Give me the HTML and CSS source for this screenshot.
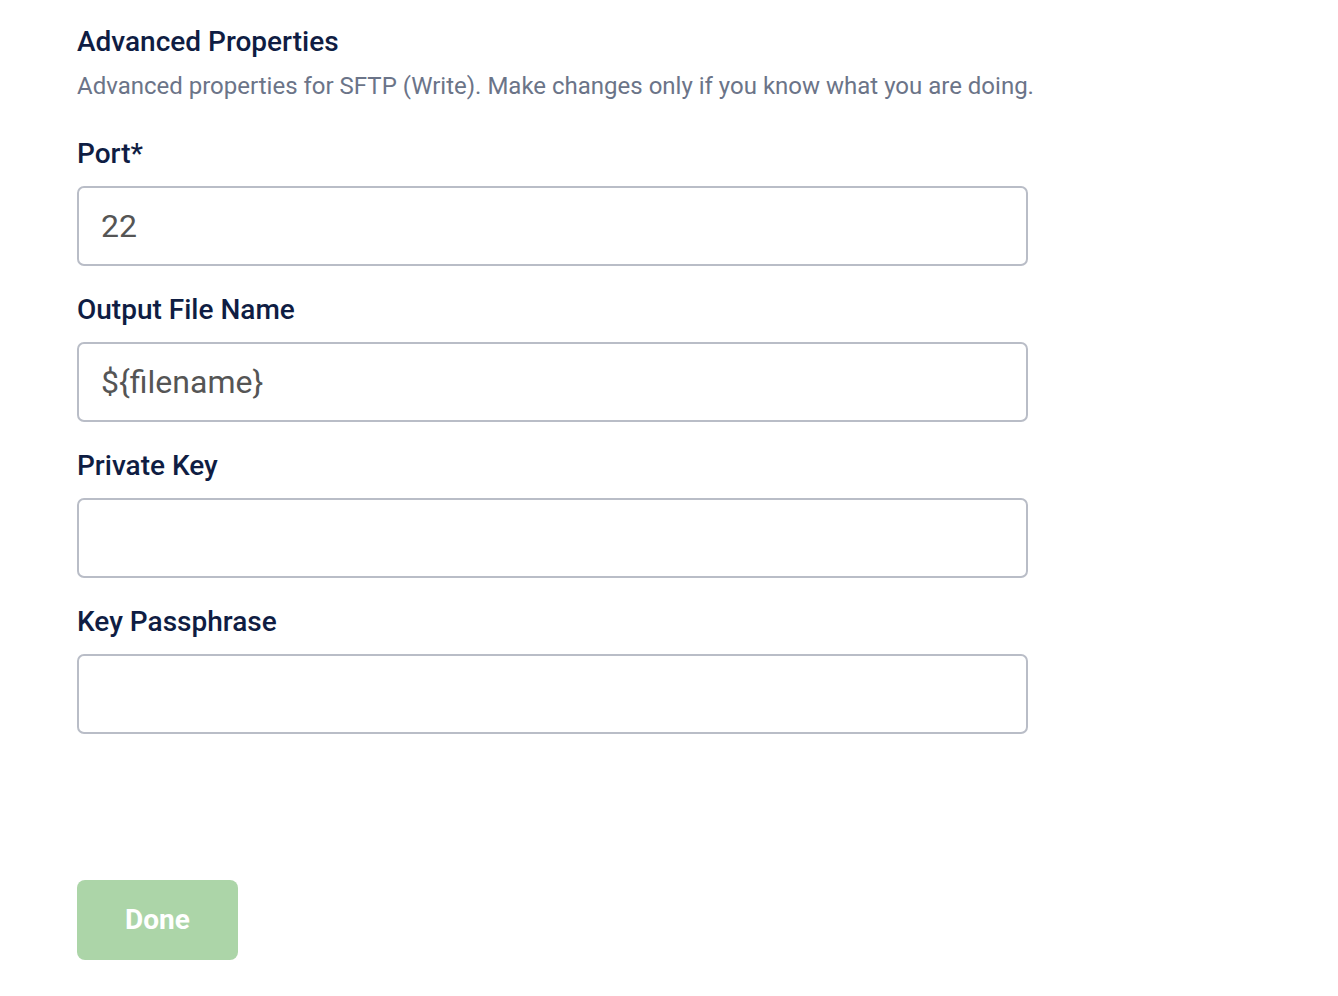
FILE: index.html
```html
<!DOCTYPE html>
<html>
<head>
<meta charset="utf-8">
<link rel="stylesheet" href="styles.css">
</head>
<body>
<div class="panel">
  <h2 class="title">Advanced Properties</h2>
  <p class="desc">Advanced properties for SFTP (Write). Make changes only if you know what you are doing.</p>
  <div class="fields">
    <div class="field">
      <label class="label">Port*</label>
      <div class="input">22</div>
    </div>
    <div class="field">
      <label class="label">Output File Name</label>
      <div class="input">${filename}</div>
    </div>
    <div class="field">
      <label class="label">Private Key</label>
      <div class="input"></div>
    </div>
    <div class="field">
      <label class="label">Key Passphrase</label>
      <div class="input"></div>
    </div>
  </div>
  <button class="done">Done</button>
</div>
</body>
</html>
```
FILE: styles.css
```css
html, body {
  margin: 0;
  padding: 0;
  background: #ffffff;
}
body {
  font-family: Roboto, "Liberation Sans", sans-serif;
}
.panel {
  padding: 24px 0 0 77px;
  width: 1100px;
  display: flex;
  flex-direction: column;
  align-items: flex-start;
}
.title {
  margin: 0;
  font-size: 28px;
  line-height: 36px;
  font-weight: 500;
  color: #0f1d43;
}
.desc {
  margin: 10px 0 0;
  font-size: 24px;
  line-height: 32px;
  color: #6b7488;
  white-space: nowrap;
}
.fields {
  margin-top: 36px;
  width: 951px;
  display: flex;
  flex-direction: column;
  gap: 28px;
}
.field {
  display: flex;
  flex-direction: column;
  gap: 16px;
}
.label {
  font-size: 28px;
  line-height: 32px;
  font-weight: 500;
  color: #0f1d43;
}
.input {
  box-sizing: border-box;
  height: 80px;
  border: 2px solid #b9bdc7;
  border-radius: 7px;
  padding: 0 22px;
  display: flex;
  align-items: center;
  font-size: 32px;
  color: #555;
}
.done {
  margin-top: 146px;
  width: 161px;
  height: 80px;
  border: none;
  border-radius: 8px;
  background: #acd5a8;
  color: #ffffff;
  font-family: Roboto, "Liberation Sans", sans-serif;
  font-size: 28px;
  font-weight: 700;
  padding: 0 0 2px;
}
```
